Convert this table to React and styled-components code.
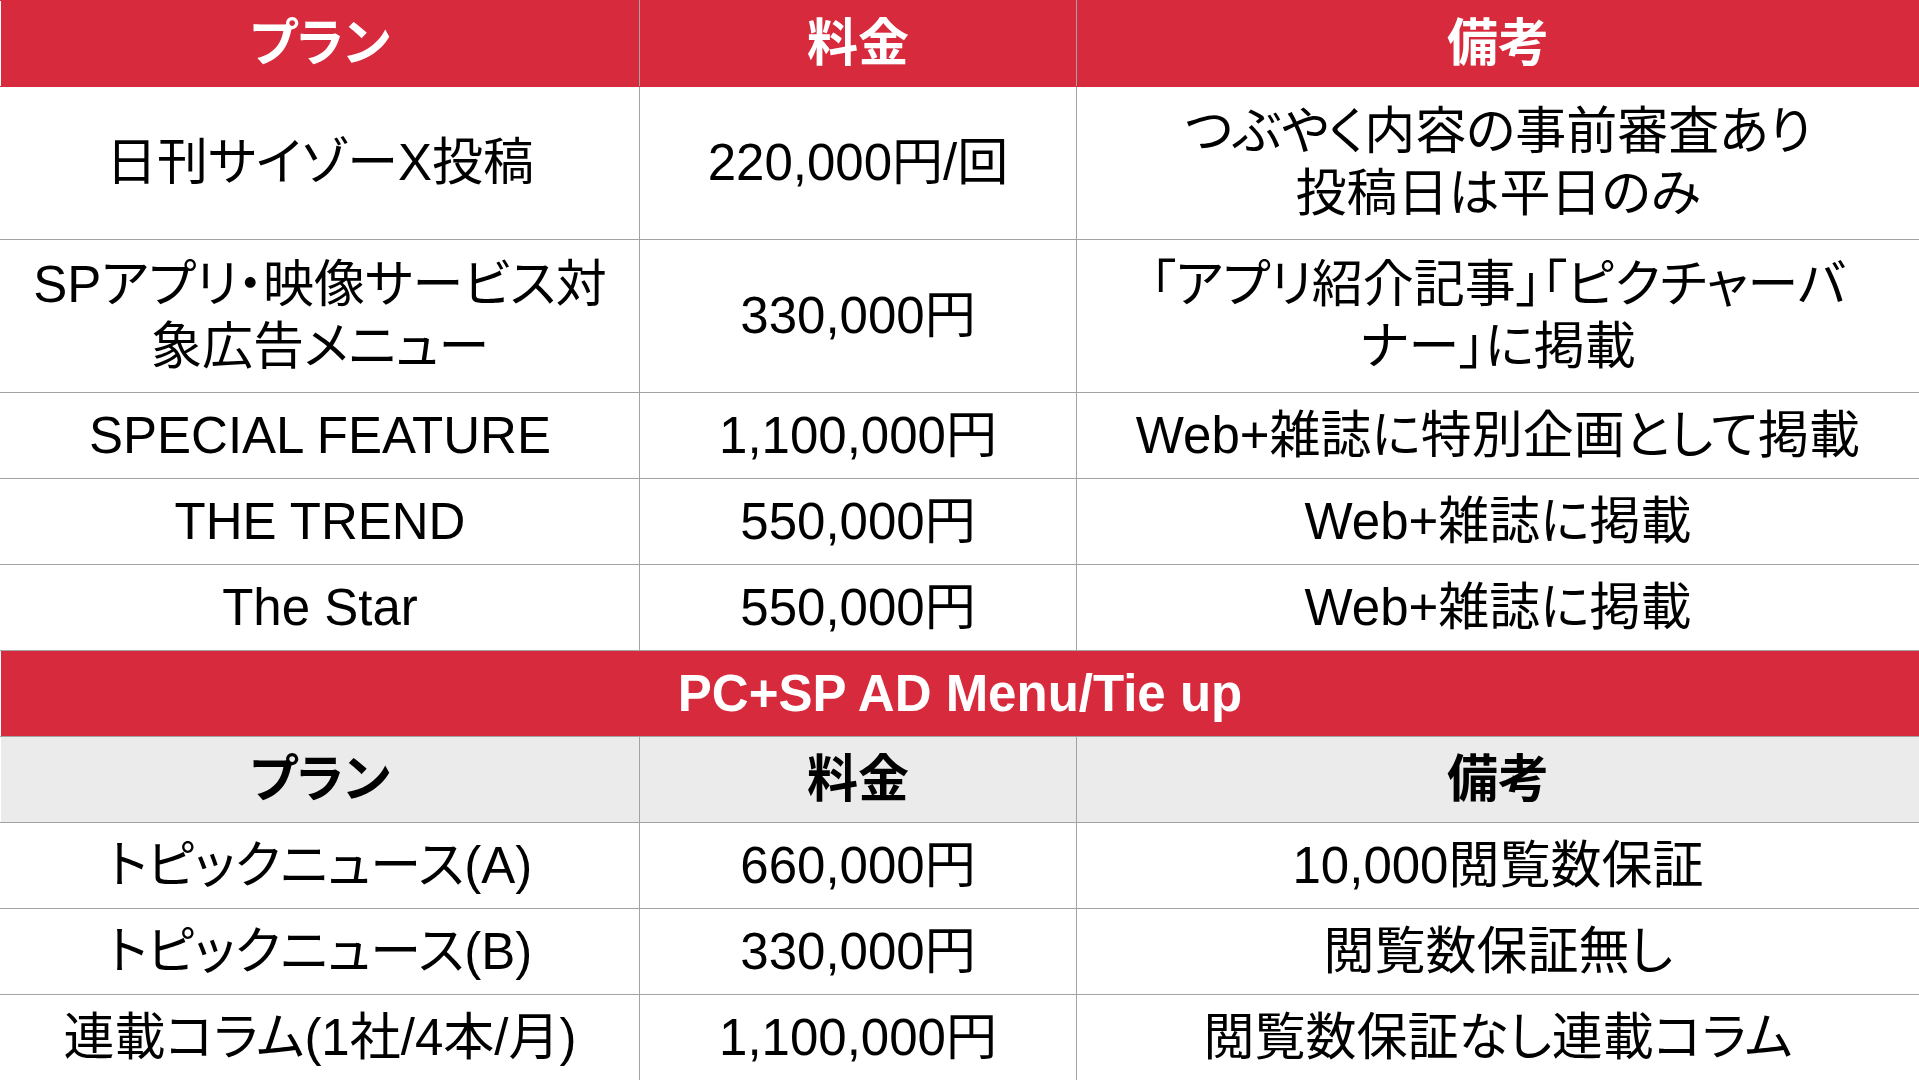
import React from 'react';
import styled, { createGlobalStyle } from 'styled-components';

const GlobalStyle = createGlobalStyle`
  html, body {
    margin: 0;
    padding: 0;
    background: #ffffff;
  }
  body {
    font-family: "Liberation Sans", "Noto Sans CJK JP", sans-serif;
  }
`;

const Table = styled.table`
  width: 1919px;
  height: 1080px;
  border-collapse: collapse;
  table-layout: fixed;
  font-family: "Liberation Sans", "Noto Sans CJK JP", sans-serif;
  font-size: 51px;
  font-feature-settings: "palt";
  color: #000;
`;

const Row = styled.tr`
  height: ${(p) => (p.$tall ? '153px' : '86px')};
`;

const HeadCell = styled.th`
  padding: 0;
  text-align: center;
  vertical-align: middle;
  font-weight: 700;
  line-height: 1.2;
  color: ${(p) => (p.$light ? '#000' : '#fff')};
  background: ${(p) => (p.$light ? '#ebebeb' : '#d72a3c')};
  border: 1px solid ${(p) => (p.$light ? '#a3a3a3' : '#d72a3c')};
  border-left-color: #a3a3a3;
  border-right-color: #a3a3a3;
  &:first-child {
    border-left-color: transparent;
  }
  &:last-child {
    border-right-color: transparent;
  }
`;

const SectionCell = styled.th`
  padding: 0;
  text-align: center;
  vertical-align: middle;
  font-weight: 700;
  color: #fff;
  background: #d72a3c;
  border: 1px solid #a3a3a3;
  border-left: none;
  border-right: none;
`;

const Cell = styled.td`
  padding: 0;
  text-align: center;
  vertical-align: middle;
  font-weight: 400;
  line-height: 62px;
  white-space: nowrap;
  border: 1px solid #a3a3a3;
  &:first-child {
    border-left-color: transparent;
  }
  &:last-child {
    border-right-color: transparent;
  }
`;

const plans = [
  {
    tall: true,
    plan: '日刊サイゾーX投稿',
    price: '220,000円/回',
    note: ['つぶやく内容の事前審査あり', '投稿日は平日のみ'],
  },
  {
    tall: true,
    plan: ['SPアプリ・映像サービス対', '象広告メニュー'],
    price: '330,000円',
    note: ['「アプリ紹介記事」「ピクチャーバ', 'ナー」に掲載'],
  },
  { plan: 'SPECIAL FEATURE', price: '1,100,000円', note: 'Web+雑誌に特別企画として掲載' },
  { plan: 'THE TREND', price: '550,000円', note: 'Web+雑誌に掲載' },
  { plan: 'The Star', price: '550,000円', note: 'Web+雑誌に掲載' },
];

const tieUps = [
  { plan: 'トピックニュース(A)', price: '660,000円', note: '10,000閲覧数保証' },
  { plan: 'トピックニュース(B)', price: '330,000円', note: '閲覧数保証無し' },
  { plan: '連載コラム(1社/4本/月)', price: '1,100,000円', note: '閲覧数保証なし連載コラム' },
];

const Lines = ({ value }) =>
  Array.isArray(value)
    ? value.map((line, i) => (
        <React.Fragment key={i}>
          {i > 0 && <br />}
          {line}
        </React.Fragment>
      ))
    : value;

const HeaderRow = ({ light }) => (
  <Row>
    <HeadCell $light={light}>プラン</HeadCell>
    <HeadCell $light={light}>料金</HeadCell>
    <HeadCell $light={light}>備考</HeadCell>
  </Row>
);

const PlanRow = ({ item }) => (
  <Row $tall={item.tall}>
    <Cell><Lines value={item.plan} /></Cell>
    <Cell><Lines value={item.price} /></Cell>
    <Cell><Lines value={item.note} /></Cell>
  </Row>
);

const App = () => (
  <>
    <GlobalStyle />
    <Table>
      <colgroup>
        <col style={{ width: 639 }} />
        <col style={{ width: 437 }} />
        <col style={{ width: 843 }} />
      </colgroup>
      <tbody>
        <HeaderRow />
        {plans.map((p) => (
          <PlanRow key={p.price + p.note} item={p} />
        ))}
        <Row>
          <SectionCell colSpan={3}>PC+SP AD Menu/Tie up</SectionCell>
        </Row>
        <HeaderRow light />
        {tieUps.map((p) => (
          <PlanRow key={p.note} item={p} />
        ))}
      </tbody>
    </Table>
  </>
);

export default App;
